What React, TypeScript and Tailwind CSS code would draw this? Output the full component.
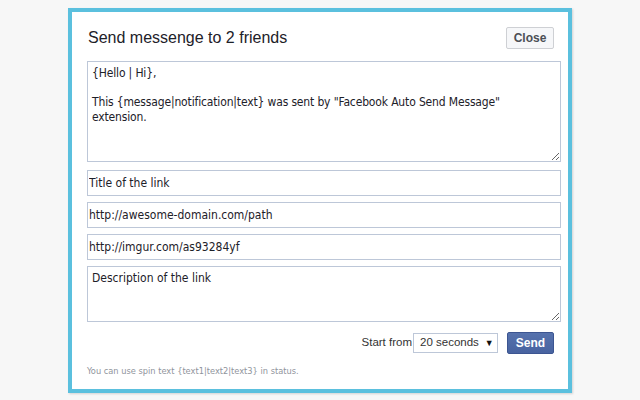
import React from "react";

export default function App() {
  const tahoma = "font-['DejaVu_Sans_Condensed','DejaVu_Sans',sans-serif] [font-stretch:condensed]";
  const arial = "font-['Liberation_Sans',Arial,sans-serif]";
  return (
    <div className={`w-[640px] h-[400px] bg-[#f7f7f7] pt-[8px] pl-[68px] ${arial}`}>
      <div className="w-[504px] h-[385px] border-4 border-[#5bc0de] bg-white pl-[15px] pr-[7px] shadow-[1px_1px_2px_rgba(0,0,0,0.15)] flex flex-col">
        <div className="flex items-start justify-between pt-[15px]">
          <div className="text-[16px] leading-[20px] text-[#1d2129] ml-[1px] mt-[1px]">Send messenge to 2 friends</div>
          <button className="w-[48px] h-[22px] mr-[7px] rounded-[2px] border border-[#ced0d4] bg-[#f6f7f9] text-[12px] font-bold text-[#4b4f56] leading-none">
            Close
          </button>
        </div>
        <textarea
          className={`mt-[12px] w-full h-[101px] border border-[#bdc7d8] px-[4px] py-[4px] text-[12px] leading-[14.5px] text-[#1d2129] outline-none resize-y tracking-[-0.15px] ${tahoma}`}
          defaultValue={'{Hello | Hi},\n\nThis {message|notification|text} was sent by "Facebook Auto Send Message" extension.'}
        />
        <input
          className={`mt-[8px] w-full h-[26px] border border-[#bdc7d8] px-[1px] text-[12px] text-[#1d2129] outline-none ${tahoma}`}
          defaultValue="Title of the link"
        />
        <input
          className={`mt-[6px] w-full h-[26px] border border-[#bdc7d8] px-[1px] text-[12px] text-[#1d2129] outline-none ${tahoma}`}
          defaultValue="http://awesome-domain.com/path"
        />
        <input
          className={`mt-[6px] w-full h-[26px] border border-[#bdc7d8] px-[1px] text-[12px] text-[#1d2129] outline-none ${tahoma}`}
          defaultValue="http://imgur.com/as93284yf"
        />
        <textarea
          className={`mt-[6px] w-full h-[56px] border border-[#bdc7d8] px-[4px] py-[4px] text-[12px] leading-[14.5px] text-[#1d2129] outline-none resize-y ${tahoma}`}
          defaultValue="Description of the link"
        />
        <div className="flex items-center justify-end mt-[10px] pr-[7px]">
          <span className="text-[11.5px] text-[#333] whitespace-nowrap">Start from</span>
          <div className="ml-[1px] w-[85px] h-[20px] border border-[#bdc7d8] flex items-center pl-[6px] text-[11.5px] text-[#333] whitespace-nowrap">
            <span>20 seconds</span>
            <span className="ml-[6px] text-[9px] leading-none text-[#111]">▼</span>
          </div>
          <button className="ml-[9px] w-[47px] h-[22px] rounded-[2px] border border-[#3c5591] bg-gradient-to-b from-[#5672ad] to-[#4863a0] text-white text-[12px] font-bold leading-none">
            Send
          </button>
        </div>
        <div className={`mt-[10px] text-[9.2px] text-[#90949c] ${tahoma}`}>
          You can use spin text {"{text1|text2|text3}"} in status.
        </div>
      </div>
    </div>
  );
}
